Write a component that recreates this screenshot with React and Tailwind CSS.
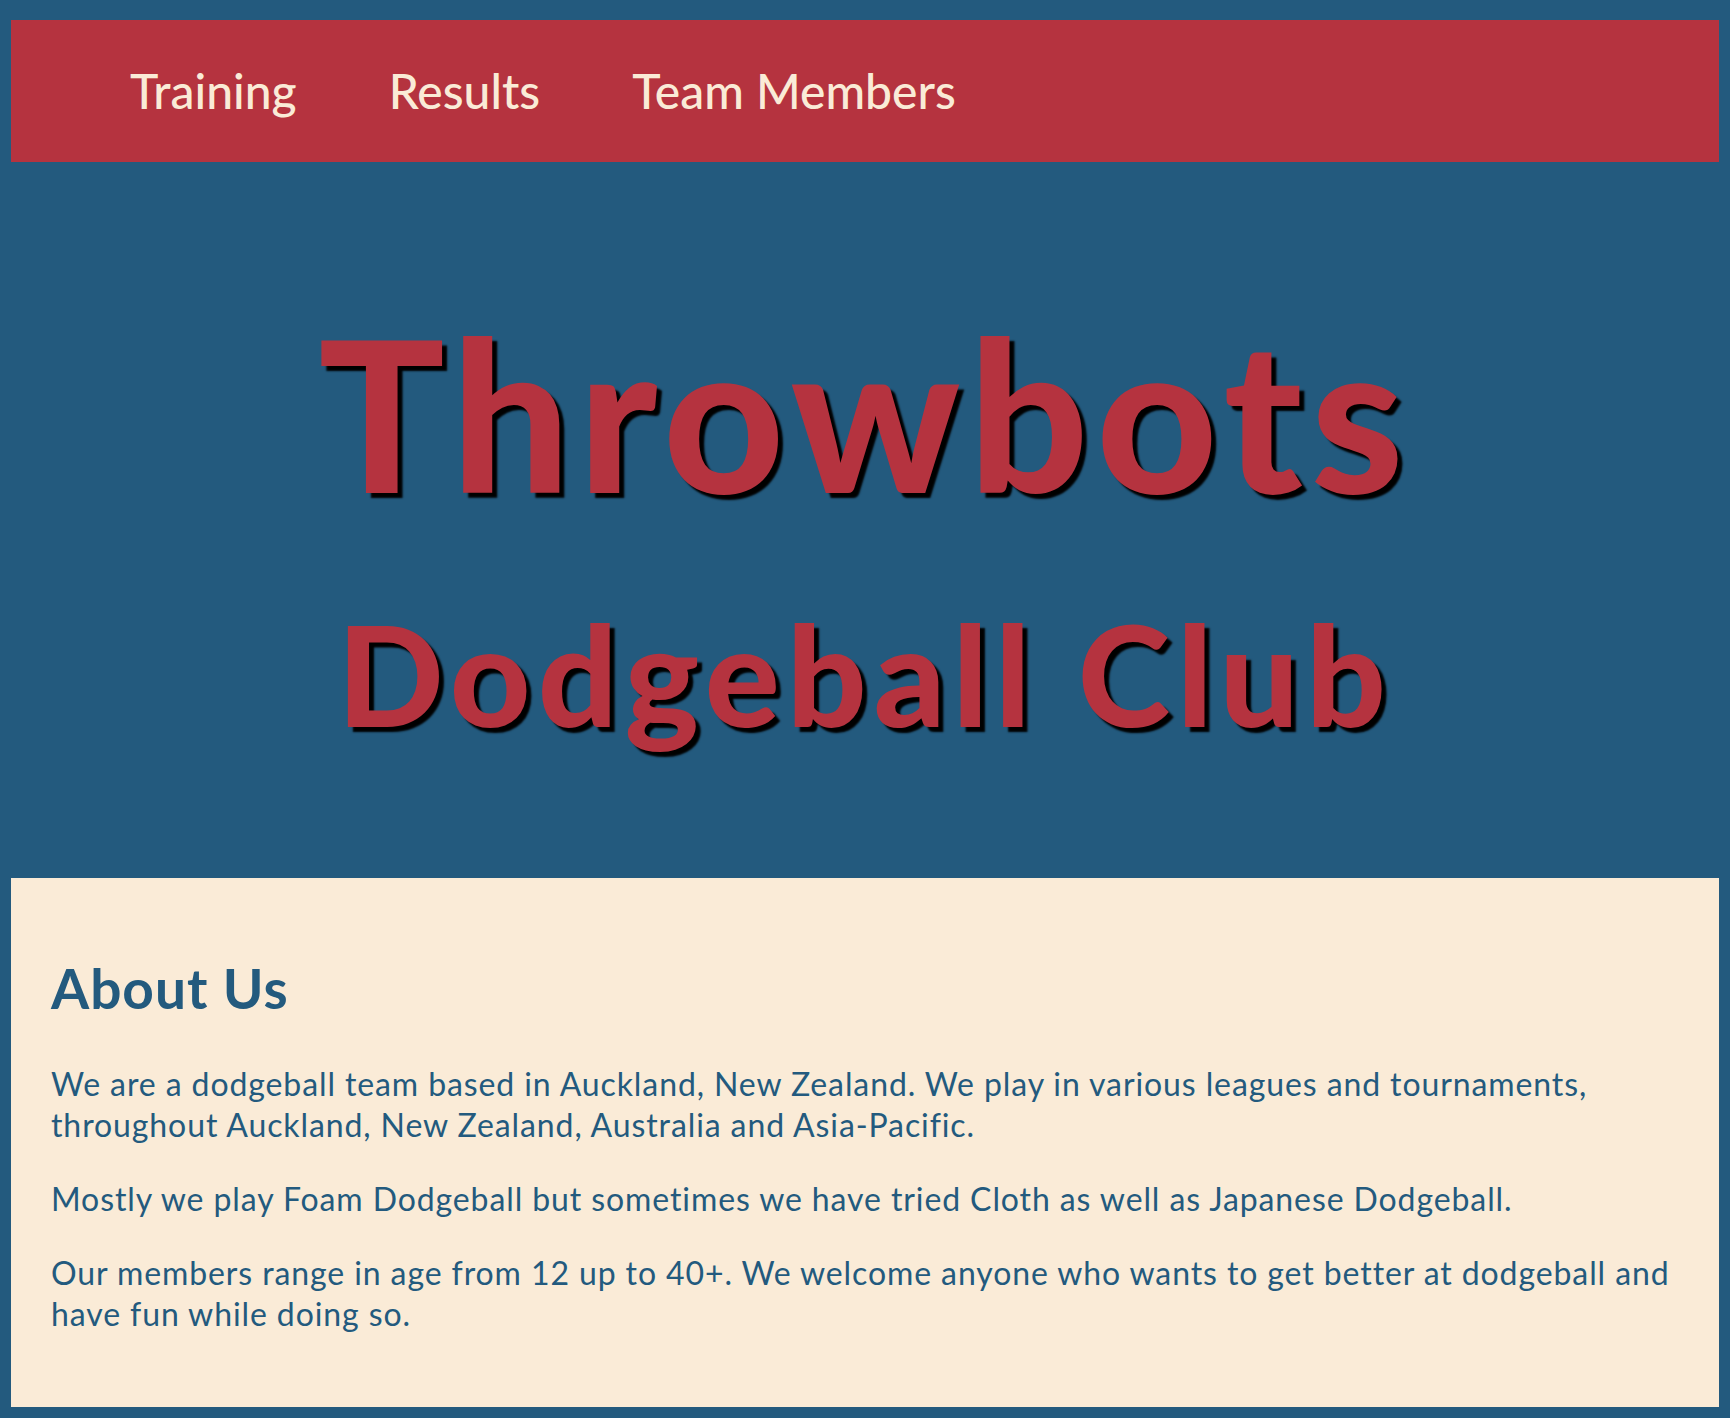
export default function App() {
  const navItems = ["Training", "Results", "Team Members"];

  return (
    <div className="min-h-screen bg-[#235a7e] px-[11px] pt-[20px] pb-[10px] font-['Lato','Liberation_Sans',sans-serif]">
      {/* Nav */}
      <nav className="h-[142px] bg-[#b5333f] flex items-center pl-[119px] gap-[92px]">
        {navItems.map((item) => (
          <a key={item} href="#" className="text-[#faebd7] text-[48px] font-medium leading-none">
            {item}
          </a>
        ))}
      </nav>

      {/* Hero */}
      <header className="flex flex-col items-center pt-[145px] pb-[135px] text-[#b5333f] font-black [text-shadow:5px_5px_2px_#000]">
        <h1 className="text-[210px] leading-none tracking-[8px] mb-[86px]">Throwbots</h1>
        <h2 className="text-[140px] leading-none tracking-[7px]">Dodgeball Club</h2>
      </header>

      {/* About */}
      <section className="bg-[#faebd7] text-[#235a7e] pl-[40px] pr-[30px] pt-[83px] pb-[73px]">
        <h3 className="text-[55px] font-bold leading-none tracking-[1px] mb-[47px]">About Us</h3>
        <p className="text-[32px] leading-[41px] tracking-[0.9px] mb-[33px]">
          We are a dodgeball team based in Auckland, New Zealand. We play in various leagues and tournaments,
          throughout Auckland, New Zealand, Australia and Asia-Pacific.
        </p>
        <p className="text-[32px] leading-[41px] tracking-[0.9px] mb-[33px]">
          Mostly we play Foam Dodgeball but sometimes we have tried Cloth as well as Japanese Dodgeball.
        </p>
        <p className="text-[32px] leading-[41px] tracking-[0.9px]">
          Our members range in age from 12 up to 40+. We welcome anyone who wants to get better at dodgeball and
          have fun while doing so.
        </p>
      </section>
    </div>
  );
}
